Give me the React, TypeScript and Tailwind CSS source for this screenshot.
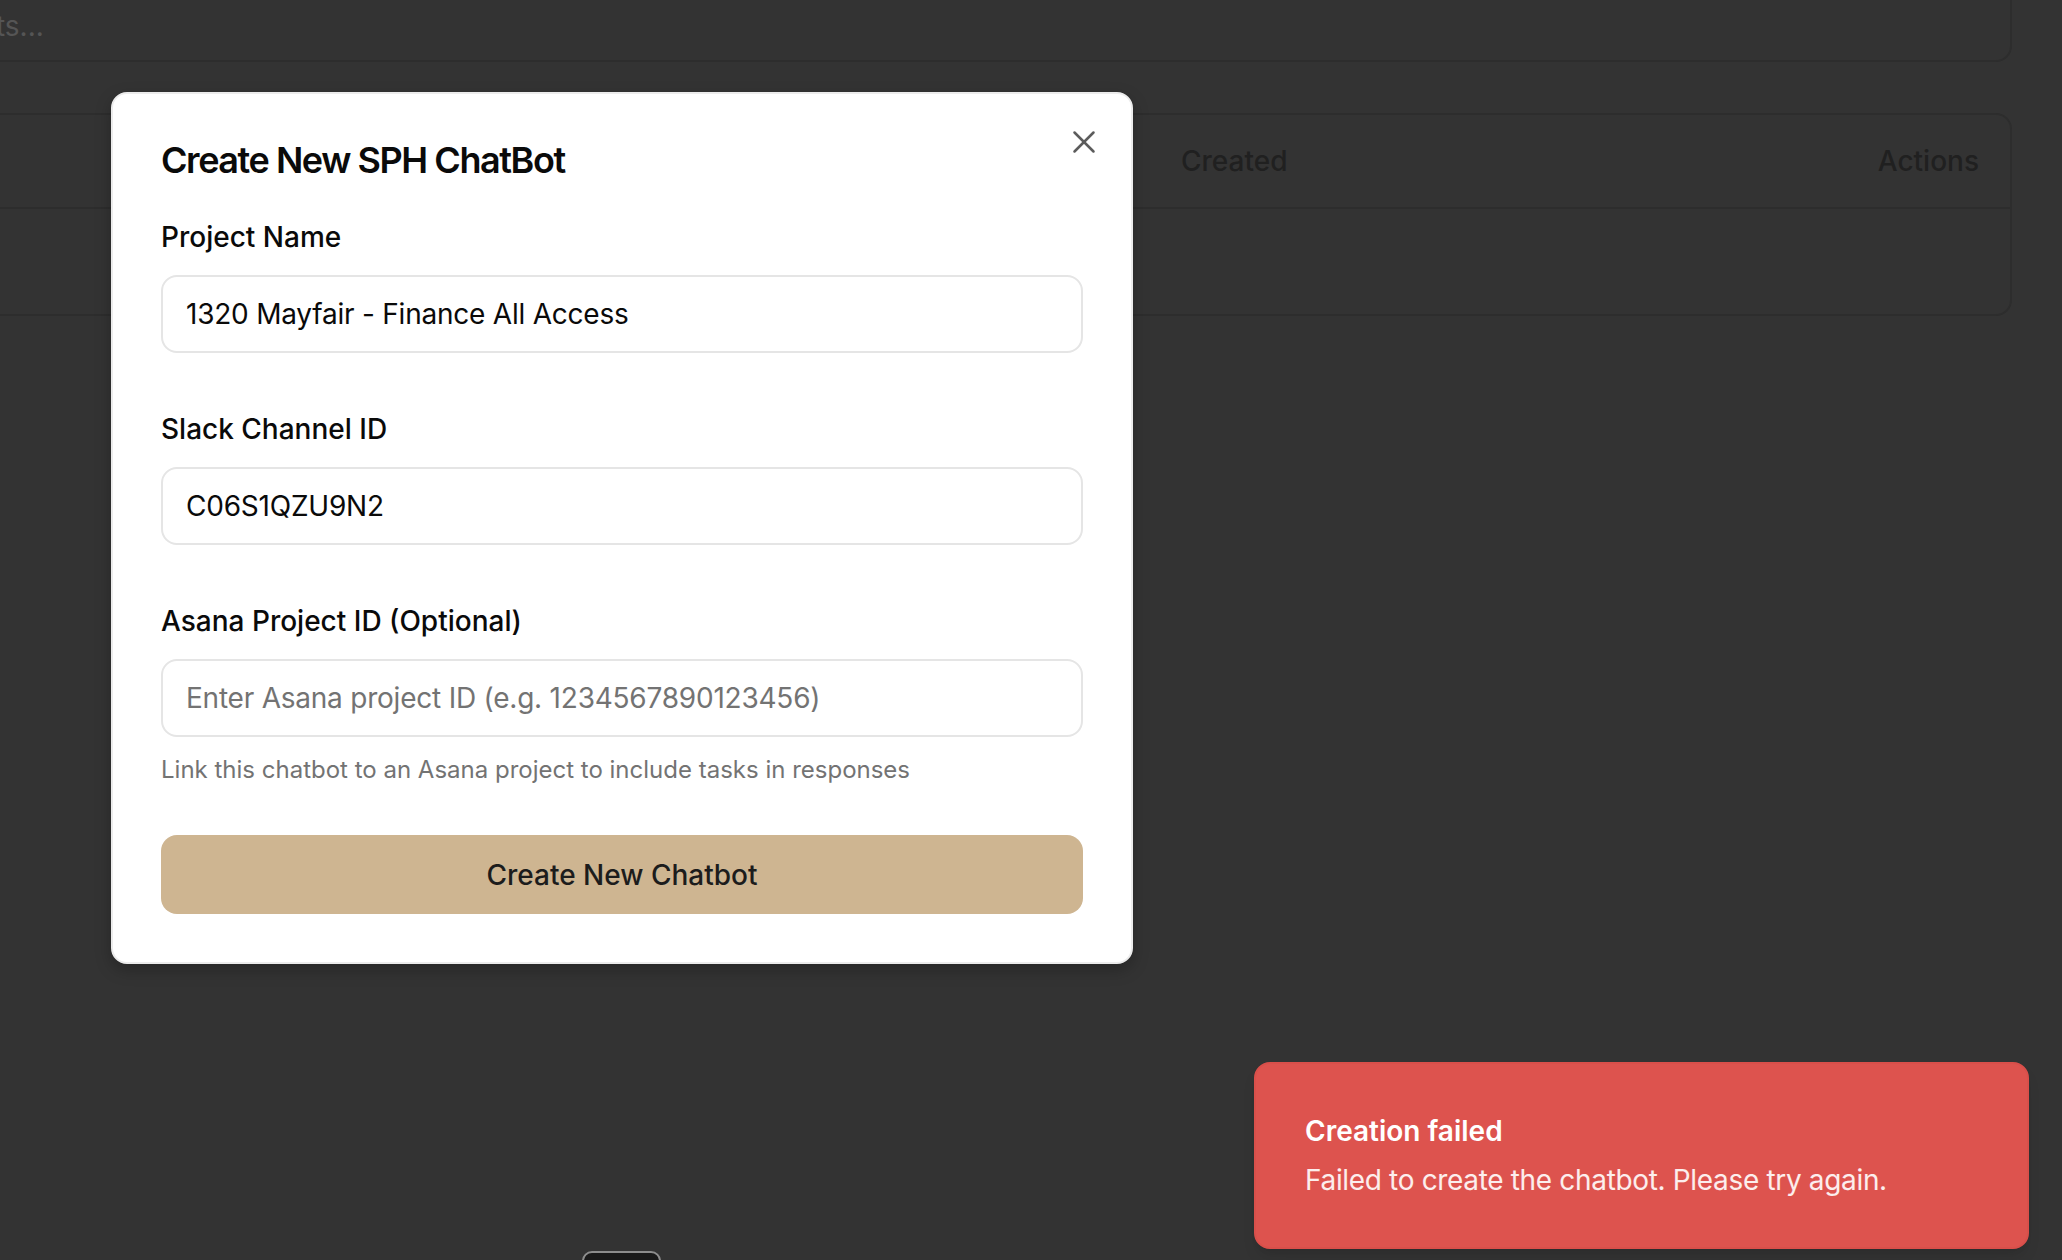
import { X } from "lucide-react";

function Field({
  label,
  value,
  placeholder,
  className,
}: {
  label: string;
  value?: string;
  placeholder?: string;
  className?: string;
}) {
  return (
    <div className={className}>
      <label className="block h-[28px] text-[28px] leading-[28px] font-medium text-[#0a0a0a]">
        {label}
      </label>
      <input
        readOnly
        value={value}
        placeholder={placeholder}
        className="mt-[24px] block h-[78px] w-full rounded-[16px] border-2 border-[#e5e5e5] bg-white px-[23px] text-[28px] tracking-[-0.008em] text-[#0a0a0a] outline-none placeholder:text-[#737373]"
      />
    </div>
  );
}

export default function App() {
  return (
    <div className="relative h-[1260px] w-[2062px] overflow-hidden bg-[#333333] font-['Inter',sans-serif]">
      {/* page behind the overlay */}
      <div className="mr-[50px] -ml-[60px] flex flex-col">
        <div className="-mt-[20px] flex h-[82px] items-center rounded-b-[16px] border-2 border-[#2d2d2d] pt-[10px] text-[28px] text-[#555555]">
          <span className="-ml-[130px]">Search projects...</span>
        </div>
        <div className="mt-[51px] h-[203px] rounded-[16px] border-2 border-[#2d2d2d]">
          <div className="flex h-[94px] items-center border-b-2 border-[#2d2d2d] pr-[31px] text-[28px] font-medium text-[#202020]">
            <span className="ml-[1239px]">Created</span>
            <span className="ml-auto">Actions</span>
          </div>
        </div>
      </div>

      {/* dialog */}
      <div className="absolute left-[111px] top-[92px] w-[1022px] rounded-[16px] border-2 border-[#ececec] bg-white p-[48px] shadow-[0_6px_16px_rgba(0,0,0,0.25)]">
        <button
          type="button"
          className="absolute right-[28px] top-[29px] text-[#5c5c5c]"
        >
          <X size={38} strokeWidth={1.6} />
        </button>
        <h2 className="h-[36px] text-[36px] leading-[36px] font-semibold tracking-[-0.04em] text-[#0a0a0a]">
          Create New SPH ChatBot
        </h2>
        <Field
          className="mt-[45px]"
          label="Project Name"
          value="1320 Mayfair - Finance All Access"
        />
        <Field className="mt-[62px]" label="Slack Channel ID" value="C06S1QZU9N2" />
        <Field
          className="mt-[62px]"
          label="Asana Project ID (Optional)"
          placeholder="Enter Asana project ID (e.g. 1234567890123456)"
        />
        <p className="mt-[21px] h-[24px] text-[24px] leading-[24px] text-[#737373]">
          Link this chatbot to an Asana project to include tasks in responses
        </p>
        <button
          type="button"
          className="mt-[53px] flex h-[79px] w-full items-center justify-center rounded-[16px] bg-[#ceb591] text-[28px] font-medium text-[#1c1c1c]"
        >
          Create New Chatbot
        </button>
      </div>

      {/* toast */}
      <div className="absolute bottom-[11px] right-[33px] flex h-[187px] w-[775px] flex-col justify-center rounded-[16px] border-2 border-[#d94f4a] bg-[#dd534e] px-[49px] text-white shadow-lg">
        <div className="h-[40px] text-[28px] leading-[40px] font-semibold">
          Creation failed
        </div>
        <div className="mt-[9px] h-[40px] text-[28px] leading-[40px] tracking-[-0.012em] text-white/90">
          Failed to create the chatbot. Please try again.
        </div>
      </div>

      {/* dev badge peeking at the bottom */}
      <div className="absolute left-[582px] top-[1251px] h-[20px] w-[79px] rounded-t-[10px] border-2 border-[#8c8c8c] bg-[#1a1a1a]" />
    </div>
  );
}
